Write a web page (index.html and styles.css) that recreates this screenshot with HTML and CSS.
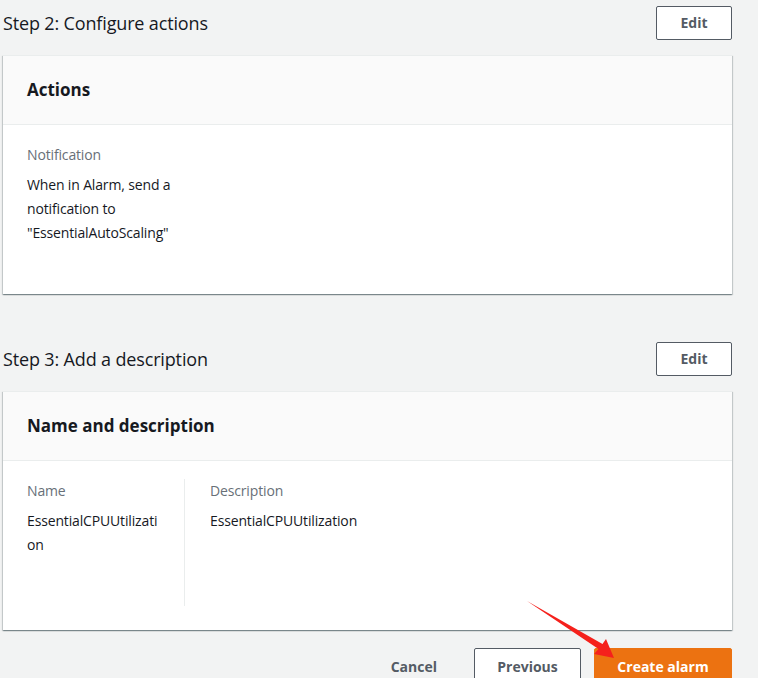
FILE: index.html
```html
<!DOCTYPE html>
<html lang="en">
<head>
<meta charset="utf-8">
<title>Create alarm - Review</title>
<link rel="stylesheet" href="styles.css">
</head>
<body>
<div class="page">
  <section class="step">
    <div class="step-header">
      <h2 class="step-title">Step 2: Configure actions</h2>
      <button class="btn btn-normal">Edit</button>
    </div>
    <div class="card">
      <div class="card-header"><h3>Actions</h3></div>
      <div class="card-body">
        <div class="col col-actions">
          <div class="label">Notification</div>
          <div class="value">When in Alarm, send a notification to "EssentialAutoScaling"</div>
        </div>
      </div>
    </div>
  </section>

  <section class="step step-3">
    <div class="step-header">
      <h2 class="step-title">Step 3: Add a description</h2>
      <button class="btn btn-normal">Edit</button>
    </div>
    <div class="card">
      <div class="card-header"><h3>Name and description</h3></div>
      <div class="card-body columns">
        <div class="col col-name">
          <div class="label">Name</div>
          <div class="value break">EssentialCPUUtilization</div>
        </div>
        <div class="col col-desc">
          <div class="label">Description</div>
          <div class="value">EssentialCPUUtilization</div>
        </div>
      </div>
    </div>
  </section>

  <div class="footer">
    <button class="btn btn-link">Cancel</button>
    <button class="btn btn-normal btn-prev">Previous</button>
    <button class="btn btn-primary">Create alarm</button>
  </div>
</div>
<svg class="arrow" width="758" height="678" viewBox="0 0 758 678" aria-hidden="true">
  <polygon points="527,601 602.5,644 606,639 614,658 594,654 598.5,649" fill="#f5211c"/>
</svg>
</body>
</html>
```

FILE: styles.css
```css
html, body {
  margin: 0;
  padding: 0;
  background: #f2f3f3;
}

body {
  font-family: "Open Sans", "Noto Sans", Arial, sans-serif;
  color: #16191f;
  font-size: 14px;
  line-height: 20px;
  letter-spacing: -0.15px;
  width: 758px;
  height: 678px;
  overflow: hidden;
  position: relative;
}

.page {
  padding: 6px 26px 0 3px;
}

.step-header {
  display: flex;
  justify-content: space-between;
  align-items: center;
  height: 34px;
  margin-bottom: 15px;
}

.step-3 {
  margin-top: 48px;
}

.step-title {
  margin: 0;
  font-size: 18px;
  font-weight: 400;
  line-height: 24px;
  letter-spacing: -0.15px;
  color: #16191f;
}

.btn {
  font-family: inherit;
  font-size: 14px;
  font-weight: 700;
  line-height: 22px;
  border-radius: 2px;
  padding: 5px 20px;
  height: 34px;
  cursor: pointer;
  letter-spacing: 0;
}

.btn-normal {
  background: #fff;
  color: #545b64;
  border: 1px solid #545b64;
  width: 76px;
}

.btn-prev {
  width: 107px;
}

.btn-link {
  background: transparent;
  border: 1px solid transparent;
  color: #545b64;
}

.btn-primary {
  background: #ec7211;
  border: 1px solid #ec7211;
  color: #fff;
  width: 138px;
}

.card {
  background: #fff;
  border-top: 1px solid #eaeded;
  box-shadow: 0 1px 1px 0 rgba(0, 28, 36, 0.3), 1px 1px 1px 0 rgba(0, 28, 36, 0.15), -1px 1px 1px 0 rgba(0, 28, 36, 0.15);
}

.card-header {
  background: #fafafa;
  border-bottom: 1px solid #eaeded;
  height: 68px;
  display: flex;
  align-items: center;
  padding: 0 24px;
}

.card-header h3 {
  margin: 0;
  font-size: 17px;
  font-weight: 700;
  line-height: 22px;
  letter-spacing: 0;
}

.card-body {
  padding: 18px 24px 24px;
  display: flex;
}

.col {
  min-height: 127px;
  box-sizing: border-box;
  padding-top: 2px;
}

.col-actions {
  width: 146px;
}

.col-name {
  width: 158px;
  padding-right: 24px;
  border-right: 1px solid #eaeded;
}

.col-desc {
  padding-left: 25px;
}

.label {
  color: #687078;
  line-height: 20px;
  margin-bottom: 8px;
}

.value {
  line-height: 24px;
  color: #16191f;
}

.break {
  overflow-wrap: anywhere;
}

.footer {
  display: flex;
  justify-content: flex-end;
  align-items: flex-start;
  gap: 13px;
  margin-top: 18px;
}

.footer .btn {
  height: 36px;
  padding-top: 7px;
}

.footer .btn-link {
  margin-right: 3px;
}

.arrow {
  position: absolute;
  left: 0;
  top: 0;
  pointer-events: none;
}
```
